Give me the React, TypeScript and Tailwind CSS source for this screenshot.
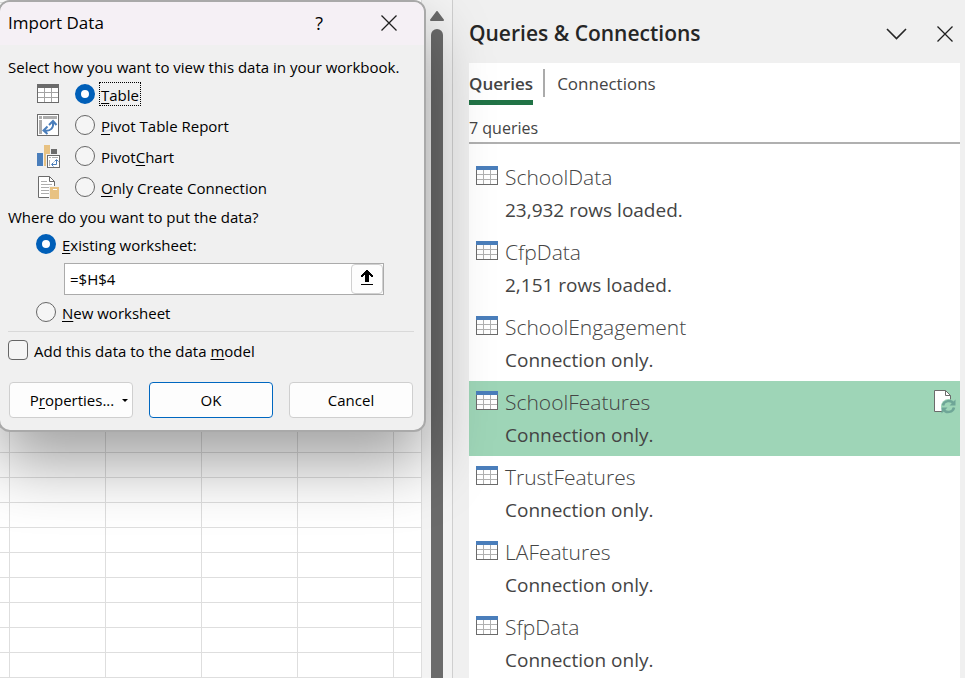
import { useState, type ReactNode } from "react";

const viewOptions = [
  { id: "table", icon: <TableIcon header="#6b6b6b" line="#a3a3a3" />, label: <><u>T</u>able</> },
  { id: "pivot-table", icon: <PivotTableIcon />, label: <><u>P</u>ivot Table Report</> },
  { id: "pivot-chart", icon: <PivotChartIcon />, label: <>Pivot<u>C</u>hart</> },
  { id: "connection", icon: <ConnectionIcon />, label: <><u>O</u>nly Create Connection</> },
];

const queries = [
  { name: "SchoolData", status: "23,932 rows loaded." },
  { name: "CfpData", status: "2,151 rows loaded." },
  { name: "SchoolEngagement", status: "Connection only." },
  { name: "SchoolFeatures", status: "Connection only." },
  { name: "TrustFeatures", status: "Connection only." },
  { name: "LAFeatures", status: "Connection only." },
  { name: "SfpData", status: "Connection only." },
];

function TableIcon({ header, line }: { header: string; line: string }) {
  return (
    <svg width="22" height="19" viewBox="0 0 22 19" shapeRendering="crispEdges" aria-hidden="true">
      <rect width="22" height="19" fill="#6b6b6b" />
      <rect x="1" y="4" width="20" height="14" fill="#fff" />
      <path d="M7.5 4v14M14.5 4v14M1 8.5h20M1 13.5h20" stroke={line} />
      <rect width="22" height="4" fill={header} />
    </svg>
  );
}

function PivotTableIcon() {
  return (
    <svg width="22" height="22" viewBox="0 0 22 22" aria-hidden="true">
      <rect x=".5" y=".5" width="21" height="21" fill="#fff" stroke="#6b6b6b" />
      <path d="M2 2h3v3H2zM6 2h14v3H6zM2 6h3v14H2z" fill="#adadad" />
      <path d="M7.500 16.500C13.500 17.500 17 14 16 8M12 11l4-4 3.500 4M10.500 12.500l-4 4 4 3.500" fill="none" stroke="#4a7ebb" strokeWidth="2" />
    </svg>
  );
}

function PivotChartIcon() {
  return (
    <svg width="24" height="24" viewBox="0 0 24 24" aria-hidden="true">
      <path d="M0 9h6v13H0z" fill="#4a7ebb" />
      <path d="M7 1h6v21H7z" fill="#e8c282" />
      <path d="M14 5h6v5h-6z" fill="#6b6b6b" />
      <path d="M9 10h15v14H9z" fill="#f0f0f0" />
      <rect x="10.500" y="11.500" width="12" height="12" fill="#fff" stroke="#6b6b6b" />
      <path d="M12 13h2v1h-2zM15 13h6v1h-6zM12 16h1v6h-1z" fill="#adadad" />
      <path d="M15 20.500h4.500V16M17.500 17.500l2-2 2 2M16.500 18.500l-2 2 2 2" fill="none" stroke="#4a7ebb" />
    </svg>
  );
}

function ConnectionIcon() {
  return (
    <svg width="22" height="24" viewBox="0 0 22 24" className="ml-px" aria-hidden="true">
      <path d="M.5 1.500h11l5 5v16H.5z" fill="#fff" stroke="#6b6b6b" />
      <path d="M11.500 1.500v5h5" fill="none" stroke="#6b6b6b" />
      <path d="M3 6.500h6M3 9.500h11M3 12.500h9M3 15.500h8M3 18.500h8" stroke="#adadad" />
      <path d="M11 11h11v13H11z" fill="#f0f0f0" />
      <path d="M12 12h9v12h-9z" fill="#e8c282" />
      <path d="M15 14.500h4" stroke="#fff" />
    </svg>
  );
}

function RefreshFileIcon() {
  return (
    <svg width="22" height="24" viewBox="0 0 22 24" aria-hidden="true">
      <path d="M.5 .5h11l5 5v16H.5z" fill="#fff" stroke="#6b6b6b" />
      <path d="M11.500 .5v5h5" fill="none" stroke="#6b6b6b" />
      <circle cx="14.500" cy="16.500" r="7.500" fill="#9ed5b7" />
      <path d="M9 15.500c1-5 8-6 10.500-2M20 17.500c-1 5-8 6-10.500 2" fill="none" stroke="#6fa697" strokeWidth="2.500" />
      <path d="M21.500 9.500v6h-6zM7.500 23.500v-6h6z" fill="#6fa697" />
    </svg>
  );
}

function CloseIcon() {
  return (
    <svg width="16" height="16" viewBox="0 0 16 16" aria-hidden="true">
      <path d="M.5 .5l15 15M15.500 .5l-15 15" stroke="#1f1f1f" strokeWidth="1.300" />
    </svg>
  );
}

function Radio({ id, name, checked, onChange }: { id: string; name: string; checked: boolean; onChange: () => void }) {
  return (
    <input
      type="radio"
      id={id}
      name={name}
      checked={checked}
      onChange={onChange}
      className="size-5 shrink-0 appearance-none rounded-full border border-[#666] bg-[#f5f5f5] checked:border-[6px] checked:border-[#005fb8] checked:bg-white"
    />
  );
}

function DialogButton({ children, primary = false }: { children: ReactNode; primary?: boolean }) {
  return (
    <button
      type="button"
      className={`flex h-9 flex-1 items-center justify-center rounded bg-[#fdfdfd] ${primary ? "border border-[#0067c0]" : "border border-[#cfcfcf]"}`}
    >
      {children}
    </button>
  );
}

function ImportDialog() {
  const [view, setView] = useState("table");
  const [target, setTarget] = useState("existing");
  return (
    <section
      role="dialog"
      aria-labelledby="import-title"
      className="absolute top-0 -left-0.5 w-[428px] overflow-hidden rounded-xl border-2 border-[#a9a9a9] bg-[#f0f0f0] text-[15px] leading-5 text-black shadow-[0_32px_64px_rgba(0,0,0,0.37)]"
    >
      <header className="flex h-[43px] items-center bg-[#f5f0f5] pr-[27px] pb-0.5 pl-2">
        <h1 id="import-title" className="flex-1 text-[17px]">Import Data</h1>
        <button type="button" aria-label="Help" className="mr-[58px] text-lg">?</button>
        <button type="button" aria-label="Close"><CloseIcon /></button>
      </header>
      <div className="px-2 pt-3 pb-3">
        <p className="mb-px whitespace-nowrap">Select how you want to view this data in your workbook.</p>
        {viewOptions.map((option) => (
          <div key={option.id} className="flex h-[31px] items-center pl-[29px]">
            <span className="flex w-[38px] justify-start">
              {option.icon}
            </span>
            <Radio id={option.id} name="view" checked={view === option.id} onChange={() => setView(option.id)} />
            <label
              htmlFor={option.id}
              className={`ml-1 border border-dotted px-px pt-0.5 underline-offset-2 ${view === option.id ? "border-black" : "border-transparent"}`}
            >
              {option.label}
            </label>
          </div>
        ))}
        <p className="flex h-7 items-center pt-0.5">Where do you want to put the data?</p>
        <div className="flex h-7 items-center gap-1.5 pl-7">
          <Radio id="existing" name="target" checked={target === "existing"} onChange={() => setTarget("existing")} />
          <label htmlFor="existing" className="pt-0.5 underline-offset-2"><u>E</u>xisting worksheet:</label>
        </div>
        <div className="mt-[5px] mr-8 ml-14 flex h-8 border border-[#ababab] bg-white">
          <input aria-label="Cell reference" defaultValue="=$H$4" className="min-w-0 flex-1 pb-px pl-[5px] outline-none" />
          <button type="button" aria-label="Collapse dialog" className="flex w-8 items-center justify-center rounded border border-[#d0d0d0] bg-[#fdfdfd] pr-px pb-0.5">
            <svg width="14" height="16" viewBox="0 0 14 16" shapeRendering="crispEdges" aria-hidden="true">
              <path d="M6 0h2v1h1v1h1v1h1v1h1v1h1v2h-2V6h-1V5H9v7H5V5H4v1H3v1H1V5h1V4h1V3h1V2h1V1h1zM1 14h12v1H1z" fill="#000" />
            </svg>
          </button>
        </div>
        <div className="mt-[3px] flex h-7 items-center gap-1.5 pl-7">
          <Radio id="new" name="target" checked={target === "new"} onChange={() => setTarget("new")} />
          <label htmlFor="new" className="pt-0.5 underline-offset-2"><u>N</u>ew worksheet</label>
        </div>
        <hr className="mt-[5px] mr-0.5 border-[#d9d9d9]" />
        <div className="mt-1 flex h-7 items-center gap-1.5">
          <input type="checkbox" id="model" className="size-5 shrink-0 appearance-none rounded border border-[#666] bg-[#f5f5f5] checked:bg-[#005fb8]" />
          <label htmlFor="model" className="pt-0.5 underline-offset-2">Add this data to the data <u>m</u>odel</label>
        </div>
        <div className="mt-[18px] flex gap-4 pr-[3px] pl-px">
          <DialogButton>
            <span className="pl-4 underline-offset-2">P<u>r</u>operties...</span>
            <svg width="6" height="3" viewBox="0 0 6 3" className="ml-2" aria-hidden="true">
              <path d="M0 0h6L3 3z" fill="#000" />
            </svg>
          </DialogButton>
          <DialogButton primary>OK</DialogButton>
          <DialogButton>Cancel</DialogButton>
        </div>
      </div>
    </section>
  );
}

function QueriesPane() {
  const [selected, setSelected] = useState("SchoolFeatures");
  return (
    <aside className="flex min-w-0 flex-1 flex-col border-l border-[#cfcfcf] bg-[#f0f0f0] pr-[5px] pl-4 text-[#444]">
      <header className="flex h-[63px] shrink-0 items-center gap-[30px] pt-1 pr-[7px]">
        <h2 className="flex-1 text-[21px] font-semibold whitespace-nowrap text-[#262626]">Queries &amp; Connections</h2>
        <button type="button" aria-label="Pane options">
          <svg width="21" height="12" viewBox="0 0 21 12" aria-hidden="true">
            <path d="M1 1l9.500 9.500L20 1" fill="none" stroke="#262626" strokeWidth="1.600" />
          </svg>
        </button>
        <button type="button" aria-label="Close pane"><CloseIcon /></button>
      </header>
      <div className="flex-1 bg-white">
        <nav className="flex h-[42px] text-[17px]">
          <button type="button" className="border-b-[5px] border-[#217346] pt-1 font-semibold">Queries</button>
          <span className="mt-1.5 mr-3 ml-2.5 h-7 w-0.5 bg-[#ababab]" />
          <button type="button" className="border-b-[5px] border-transparent pt-1">Connections</button>
        </nav>
        <p className="flex h-[39px] items-center border-b-2 border-[#b0b0b0] pt-2 text-base">7 queries</p>
        <ul className="pt-3">
          {queries.map((query) => (
            <li key={query.name}>
              <button
                type="button"
                onClick={() => setSelected(query.name)}
                className={`flex h-[75px] w-full items-start pr-1 pl-[7px] text-left ${selected === query.name ? "bg-[#9ed5b7]" : "bg-white"}`}
              >
                <span className="mt-2.5"><TableIcon header="#4a7ebb" line="#b0b0b0" /></span>
                <span className="ml-[7px] flex flex-1 flex-col pt-1">
                  <span className="text-[21px] leading-[34px] font-light">{query.name}</span>
                  <span className="text-[19px] leading-8">{query.status}</span>
                </span>
                {selected === query.name && <span className="mt-[9px]"><RefreshFileIcon /></span>}
              </button>
            </li>
          ))}
        </ul>
      </div>
    </aside>
  );
}

export default function App() {
  return (
    <main className="relative flex h-screen overflow-hidden bg-[#f3f3f3] font-['Open_Sans','Noto_Sans',sans-serif]">
      <div className="w-[422px] border-r border-[#dedede] bg-white bg-[linear-gradient(to_right,#dedede_1px,transparent_1px),linear-gradient(to_bottom,#dedede_1px,transparent_1px)] bg-size-[96px_25px] bg-position-[9px_2px]" />
      <div className="flex w-[30px] flex-col items-center bg-[#f3f3f3] pt-[11px]">
        <svg width="14" height="10" viewBox="0 0 14 10" aria-hidden="true">
          <path d="M7 1L13 9H1z" fill="#6b6b6b" stroke="#6b6b6b" strokeWidth="2" strokeLinejoin="round" />
        </svg>
        <div className="mt-2 w-3 flex-1 rounded-t-full bg-[#6b6b6b]" />
      </div>
      <QueriesPane />
      <ImportDialog />
    </main>
  );
}
